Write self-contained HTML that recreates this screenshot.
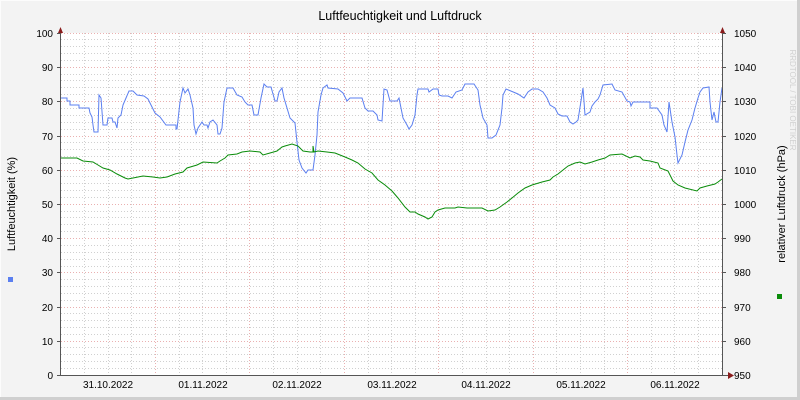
<!DOCTYPE html>
<html><head><meta charset="utf-8"><style>
html,body{margin:0;padding:0;background:#f3f3f3}
svg{display:block}
text{font-family:"Liberation Sans",sans-serif;font-size:10px;fill:#000}
</style></head><body>
<svg width="800" height="400" viewBox="0 0 800 400" xmlns="http://www.w3.org/2000/svg">
<rect x="0" y="0" width="800" height="400" fill="#f3f3f3"/>
<path d="M0.5 400V0.5H800" stroke="#fcfcfc" stroke-width="1" fill="none"/>
<path d="M0 398.5H798.5V0" stroke="#cfcfcf" stroke-width="3" fill="none"/>
<rect x="61" y="33" width="661" height="342" fill="#ffffff"/>
<g stroke="#d0d0d0" stroke-width="1" stroke-dasharray="1,2" fill="none">
<path d="M61 368.5H722M61 361.5H722M61 354.5H722M61 347.5H722M61 334.5H722M61 327.5H722M61 320.5H722M61 313.5H722M61 300.5H722M61 293.5H722M61 286.5H722M61 279.5H722M61 266.5H722M61 259.5H722M61 252.5H722M61 245.5H722M61 231.5H722M61 224.5H722M61 217.5H722M61 211.5H722M61 197.5H722M61 190.5H722M61 183.5H722M61 176.5H722M61 163.5H722M61 156.5H722M61 149.5H722M61 142.5H722M61 129.5H722M61 122.5H722M61 115.5H722M61 108.5H722M61 94.5H722M61 87.5H722M61 80.5H722M61 74.5H722M61 60.5H722M61 53.5H722M61 46.5H722M61 39.5H722"/>
<path d="M84.5 33V375M108.5 33V375M131.5 33V375M179.5 33V375M202.5 33V375M226.5 33V375M273.5 33V375M297.5 33V375M320.5 33V375M368.5 33V375M391.5 33V375M415.5 33V375M462.5 33V375M486.5 33V375M509.5 33V375M556.5 33V375M580.5 33V375M604.5 33V375M651.5 33V375M674.5 33V375M698.5 33V375"/>
</g>
<g stroke="#eab0b0" stroke-width="1" stroke-dasharray="1,2" fill="none">
<path d="M61 341.5H722M61 307.5H722M61 272.5H722M61 238.5H722M61 204.5H722M61 170.5H722M61 136.5H722M61 101.5H722M61 67.5H722M61 33.5H722"/>
<path d="M155.5 33V375M249.5 33V375M344.5 33V375M438.5 33V375M533.5 33V375M627.5 33V375"/>
</g>
<polyline fill="none" stroke="#5b7ff0" stroke-width="1" points="60,98 67,98 67,101 70,101 70,105 79,105 79,108 89,108 90,113 92,117 93,125 94,132 98,132 99,95 101,98 103,125 107,125 108,118 112,118 113,122 115,122 117,128 118,118 121,115 123,105 126,98 129,91 133,91 137,95 144,96 148,99 151,105 155,113 160,117 166,125 176,125 176,129 177,129 180,102 183,88 185,93 188,89 190,95 193,108 194,125 196,134 198,128 202,122 204,125 207,125 208,128 210,122 213,120 217,125 218,134 220,134 222,128 224,102 227,88 233,88 237,95 242,97 245,102 248,105 252,105 254,115 258,115 261,98 264,84 267,87 271,87 275,101 277,101 279,92 282,88 284,98 287,108 290,118 295,123 297,142 299,160 302,168 306,173 308,170 313,170 315,155 317,135 318,112 321,95 323,88 327,85 328,88 338,89 343,93 347,101 350,98 362,98 365,108 368,111 373,111 377,115 378,120 382,121 384,89 387,90 390,101 397,101 399,98 401,108 403,118 407,125 409,129 412,125 415,115 417,95 418,89 428,89 429,92 433,89 438,89 439,95 442,96 448,96 452,98 456,92 462,90 465,84 474,84 478,90 480,105 483,118 487,125 488,138 492,138 496,135 500,125 502,108 503,95 506,89 518,94 524,98 528,92 532,89 538,89 543,92 547,98 550,105 555,108 558,114 562,116 567,116 570,122 573,124 576,122 578,120 581,101 583,88 585,115 590,112 592,106 595,102 598,99 600,95 603,85 612,84 615,90 622,92 627,101 630,102 631,106 633,102 650,102 650,108 657,108 662,115 664,125 667,132 669,102 672,122 675,137 677,155 678,163 682,155 685,142 688,130 692,120 695,108 698,98 700,92 703,88 709,87 710,102 712,120 714,112 716,122 718,122 720,102 722,88"/>
<polyline fill="none" stroke="#0a8c0a" stroke-width="1" points="60,158 77,158 83,161 93,162 98,165 103,168 110,170 117,174 125,178 128,179 133,178 143,176 153,177 160,178 167,177 175,174 183,172 187,168 197,165 203,162 217,163 220,161 225,158 228,155 237,154 242,152 250,151 260,152 263,155 270,153 277,151 282,147 285,146 292,144 298,146 303,151 310,152 313,152 313,146 314,152 318,151 327,152 335,153 345,157 352,160 358,163 365,169 372,173 378,180 385,185 392,191 398,198 405,207 410,212 415,212 418,214 425,217 428,219 432,217 435,212 438,210 445,208 455,208 458,207 467,208 475,208 482,208 488,211 495,210 500,207 507,202 512,198 518,193 525,188 532,185 542,182 550,180 553,177 558,174 563,170 568,166 575,163 580,162 585,164 592,162 598,160 605,158 610,155 622,154 630,158 635,156 640,157 643,160 650,161 658,163 660,168 668,171 673,181 678,185 685,188 697,191 700,188 707,186 715,184 718,182 722,179"/>
<g stroke="#555" stroke-width="1" fill="none">
<path d="M60.5 30V376M722.5 30V376M57 375.5H728"/>
<path d="M57 341.5H61M57 307.5H61M57 272.5H61M57 238.5H61M57 204.5H61M57 170.5H61M57 136.5H61M57 101.5H61M57 67.5H61M57 33.5H61"/>
<path d="M722 341.5H726M722 307.5H726M722 272.5H726M722 238.5H726M722 204.5H726M722 170.5H726M722 136.5H726M722 101.5H726M722 67.5H726M722 33.5H726"/>
</g>
<path d="M58 33L60.5 27L63 33Z M720 33L722.5 27L725 33Z M728 372L734 375.5L728 379Z" fill="#8a1c1c"/>
<text x="400" y="20" text-anchor="middle" style="font-size:12.5px">Luftfeuchtigkeit und Luftdruck</text>
<g text-anchor="end">
<text x="53" y="37">100</text><text x="53" y="71">90</text><text x="53" y="105">80</text><text x="53" y="140">70</text><text x="53" y="174">60</text><text x="53" y="208">50</text><text x="53" y="242">40</text><text x="53" y="276">30</text><text x="53" y="311">20</text><text x="53" y="345">10</text><text x="53" y="379">0</text>
</g>
<g>
<text x="734" y="37">1050</text><text x="734" y="71">1040</text><text x="734" y="105">1030</text><text x="734" y="140">1020</text><text x="734" y="174">1010</text><text x="734" y="208">1000</text><text x="734" y="242">990</text><text x="734" y="276">980</text><text x="734" y="311">970</text><text x="734" y="345">960</text><text x="734" y="379">950</text>
</g>
<g text-anchor="middle">
<text x="108" y="388">31.10.2022</text><text x="203" y="388">01.11.2022</text><text x="297" y="388">02.11.2022</text><text x="392" y="388">03.11.2022</text><text x="486" y="388">04.11.2022</text><text x="581" y="388">05.11.2022</text><text x="675" y="388">06.11.2022</text>
</g>
<text transform="translate(15,204) rotate(-90)" text-anchor="middle" style="font-size:11px">Luftfeuchtigkeit (%)</text>
<text transform="translate(785,204) rotate(-90)" text-anchor="middle" style="font-size:11px">relativer Luftdruck (hPa)</text>
<text transform="translate(790,100) rotate(90)" text-anchor="middle" style="font-size:8px;fill:#d0d0d0">RRDTOOL / TOBI OETIKER</text>
<rect x="8" y="277" width="5" height="5" fill="#5b7ff0"/>
<rect x="777" y="294" width="5" height="5" fill="#0a8c0a"/>
</svg>
</body></html>
